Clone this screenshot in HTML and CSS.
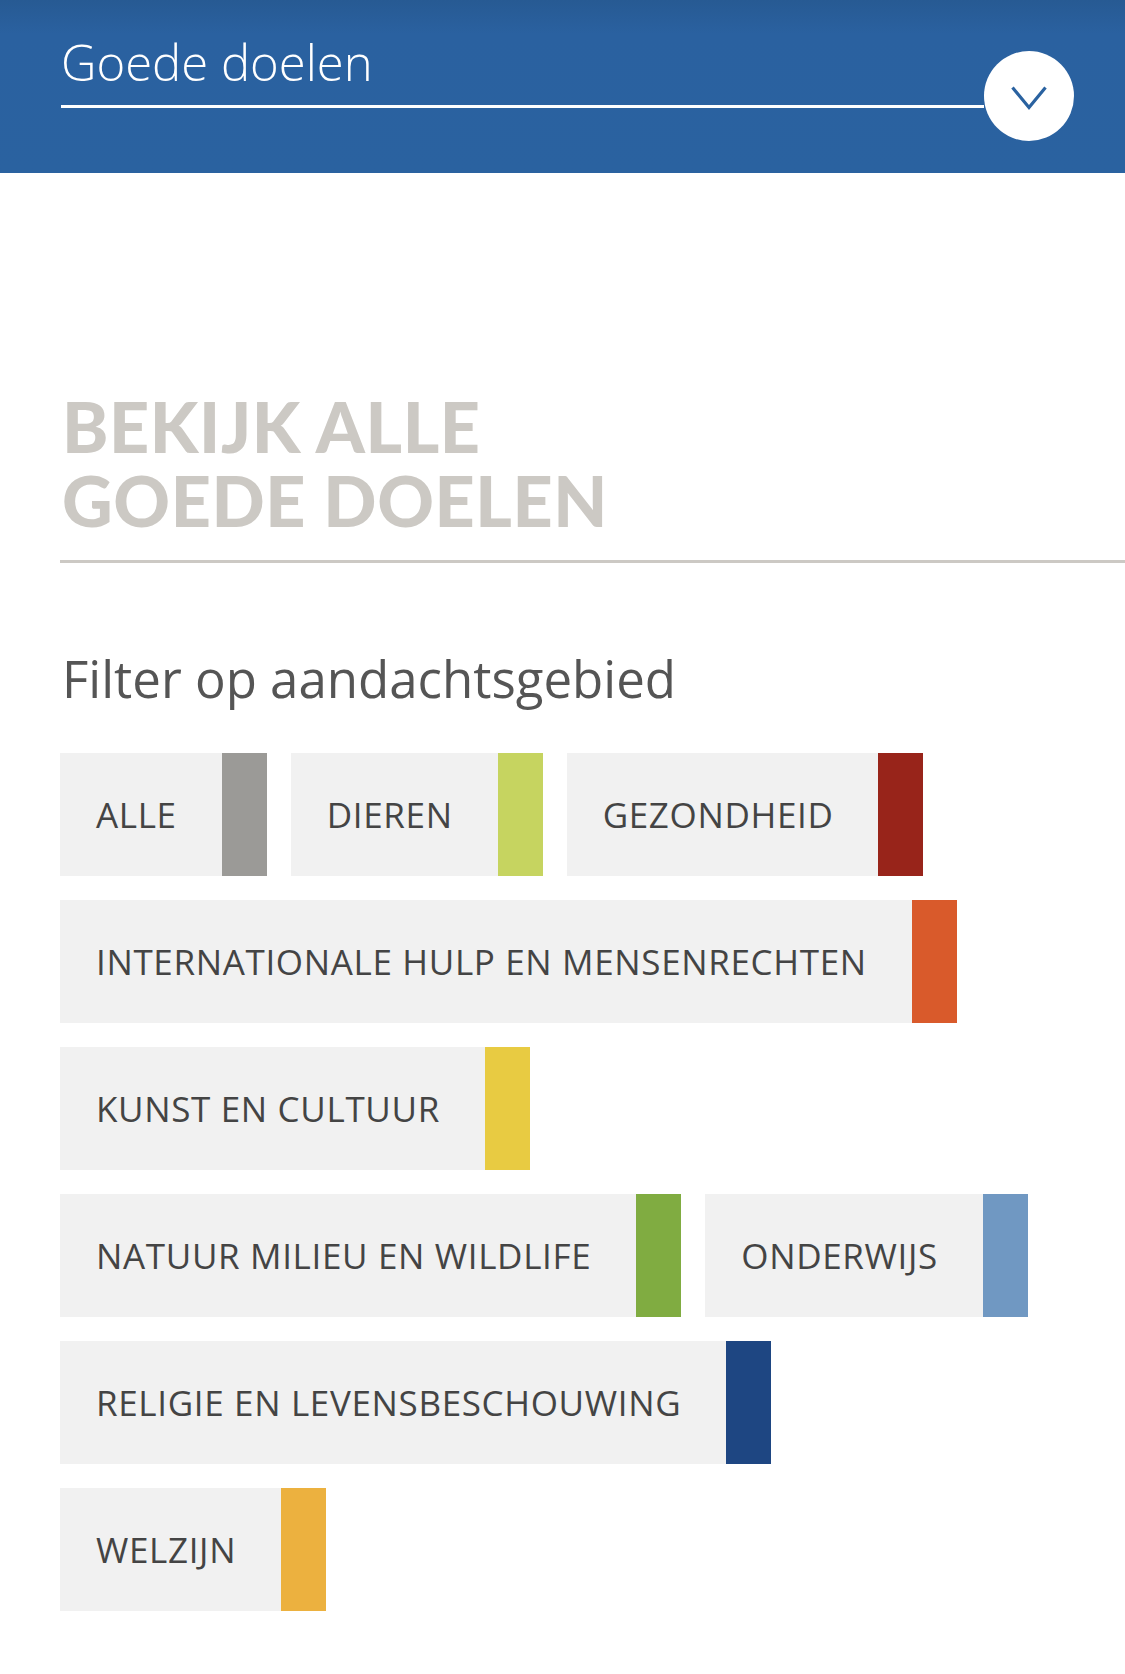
FILE: index.html
```html
<!DOCTYPE html>
<html lang="nl">
<head>
<meta charset="utf-8">
<title>Goede doelen</title>
<link rel="stylesheet" href="styles.css">
</head>
<body>
<header class="top">
  <div class="select">
    <div class="select-field"><span class="select-label">Goede doelen</span></div>
    <button class="select-btn" aria-label="Open">
      <svg class="chevron" width="38" height="26" viewBox="0 0 38 26"><polyline points="2.5,2.5 19,22.5 35.5,2.5" fill="none" stroke="#2a62a0" stroke-width="3.2" stroke-linejoin="miter"/></svg>
    </button>
  </div>
</header>
<main class="content">
  <h1 class="page-title"><span class="title-line">BEKIJK ALLE</span><span class="title-line">GOEDE DOELEN</span></h1>
  <div class="divider"></div>
  <h2 class="filter-title">Filter op aandachtsgebied</h2>
  <ul class="tags">
    <li class="tag"><span class="tag-label">ALLE</span><span class="tag-bar bar-alle"></span></li>
    <li class="tag"><span class="tag-label">DIEREN</span><span class="tag-bar bar-dieren"></span></li>
    <li class="tag"><span class="tag-label">GEZONDHEID</span><span class="tag-bar bar-gezondheid"></span></li>
    <li class="tag"><span class="tag-label">INTERNATIONALE HULP EN MENSENRECHTEN</span><span class="tag-bar bar-internationaal"></span></li>
    <li class="tag"><span class="tag-label">KUNST EN CULTUUR</span><span class="tag-bar bar-kunst"></span></li>
    <li class="tag"><span class="tag-label">NATUUR MILIEU EN WILDLIFE</span><span class="tag-bar bar-natuur"></span></li>
    <li class="tag"><span class="tag-label">ONDERWIJS</span><span class="tag-bar bar-onderwijs"></span></li>
    <li class="tag"><span class="tag-label">RELIGIE EN LEVENSBESCHOUWING</span><span class="tag-bar bar-religie"></span></li>
    <li class="tag"><span class="tag-label">WELZIJN</span><span class="tag-bar bar-welzijn"></span></li>
  </ul>
</main>
</body>
</html>
```
FILE: styles.css
```css
html, body {
  margin: 0;
  padding: 0;
  background: #ffffff;
}
body {
  font-family: "Open Sans", "Liberation Sans", sans-serif;
}
.top {
  background: linear-gradient(to bottom, #275a93 0px, #2a61a0 34px, #2a62a0 173px);
  height: 173px;
  padding: 0 51px 0 61px;
  box-sizing: border-box;
}
.select {
  display: flex;
  align-items: flex-start;
}
.select-field {
  flex: 1;
  padding-top: 38px;
  box-sizing: border-box;
  border-bottom: 3px solid #ffffff;
  height: 108px;
}
.select-label {
  display: block;
  color: #ffffff;
  font-size: 49px;
  font-weight: 300;
  line-height: 48px;
}
.select-btn {
  margin-top: 51px;
  width: 90px;
  height: 90px;
  border-radius: 50%;
  background: #ffffff;
  border: none;
  padding: 0;
  display: flex;
  align-items: center;
  justify-content: center;
}
.chevron {
  display: block;
  margin-top: 3px;
}
.content {
  padding: 0 0 60px 60px;
}
.page-title {
  margin: 216px 0 0 2px;
  font-family: "Lato", "DejaVu Sans", sans-serif;
  font-weight: 900;
  font-size: 70px;
  line-height: 74px;
  color: #ccc9c4;
  letter-spacing: 0.6px;
}
.title-line {
  display: block;
  height: 74px;
}
.divider {
  margin-top: 23px;
  height: 3px;
  background: #ccc9c4;
}
.filter-title {
  margin: 85px 0 45px 2px;
  font-size: 51px;
  font-weight: 400;
  line-height: 60px;
  color: #555555;
}
.tags {
  list-style: none;
  margin: 0;
  padding: 0 80px 0 0;
  display: flex;
  flex-wrap: wrap;
  gap: 24px;
}
.tag {
  display: flex;
  height: 123px;
  background: #f1f1f1;
}
.tag-label {
  padding: 0 45px 0 36px;
  font-size: 35px;
  letter-spacing: 0.65px;
  line-height: 123px;
  color: #444444;
  white-space: nowrap;
}
.tag-bar {
  width: 45px;
}
.bar-alle { background: #9b9a97; }
.bar-dieren { background: #c6d460; }
.bar-gezondheid { background: #98241a; }
.bar-internationaal { background: #d95a2b; }
.bar-kunst { background: #e8cb42; }
.bar-natuur { background: #80ac41; }
.bar-onderwijs { background: #7098c2; }
.bar-religie { background: #1e4682; }
.bar-welzijn { background: #ecb13f; }
```
